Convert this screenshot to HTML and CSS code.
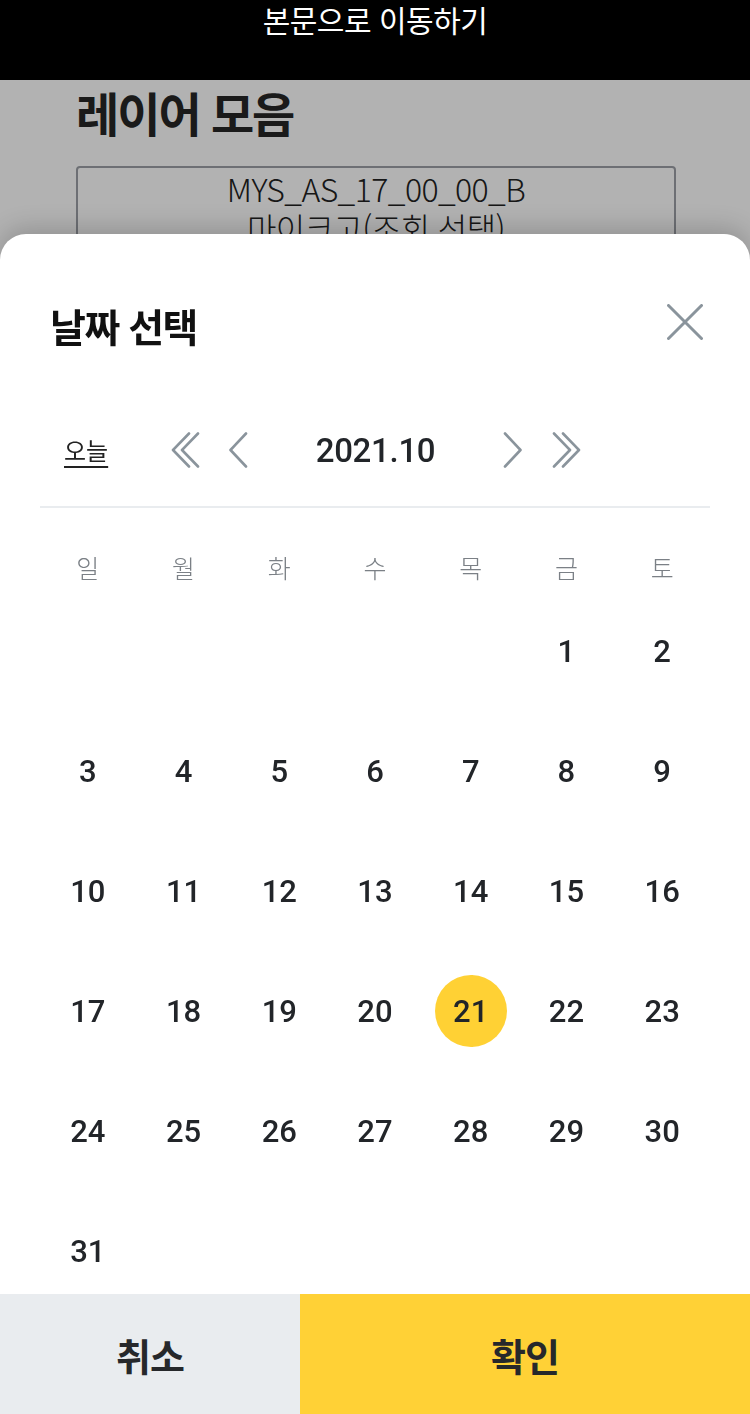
FILE: index.html
```html
<!DOCTYPE html>
<html lang="ko">
<head>
<meta charset="utf-8">
<title>날짜 선택</title>
<link rel="stylesheet" href="styles.css">
</head>
<body>
<a class="skip" href="#main">본문으로 이동하기</a>
<main class="page" id="main">
  <h1 class="page-title">레이어 모음</h1>
  <div class="code-box">
    <p>MYS_AS_17_00_00_B</p>
    <p>마이크고(조회 선택)</p>
  </div>
</main>
<div class="dim"></div>
<section class="sheet" role="dialog" aria-label="날짜 선택">
  <header class="sheet-head">
    <h2 class="sheet-title">날짜 선택</h2>
    <button class="close" type="button" aria-label="닫기">
      <svg width="36" height="36" viewBox="0 0 36 36"><path d="M1.5 1.5 L34.5 34.5 M34.5 1.5 L1.5 34.5" stroke="#8a949c" stroke-width="3" fill="none" stroke-linecap="round"/></svg>
    </button>
  </header>
  <div class="nav">
    <a class="today" href="#">오늘</a>
    <button class="ico" type="button" aria-label="이전 해">
      <svg width="32" height="40" viewBox="0 0 32 40"><path d="M19 3.5 L3 20 L19 36.5 M28 3.5 L12 20 L28 36.5" stroke="#8a949c" stroke-width="2.6" fill="none" stroke-linecap="round" stroke-linejoin="round"/></svg>
    </button>
    <button class="ico prev" type="button" aria-label="이전 달">
      <svg width="20" height="40" viewBox="0 0 20 40"><path d="M18 3.5 L2.5 20 L18 36.5" stroke="#8a949c" stroke-width="2.6" fill="none" stroke-linecap="round" stroke-linejoin="round"/></svg>
    </button>
    <div class="month">2021.10</div>
    <button class="ico" type="button" aria-label="다음 달">
      <svg width="20" height="40" viewBox="0 0 20 40"><path d="M2 3.5 L17.5 20 L2 36.5" stroke="#8a949c" stroke-width="2.6" fill="none" stroke-linecap="round" stroke-linejoin="round"/></svg>
    </button>
    <button class="ico last" type="button" aria-label="다음 해">
      <svg width="32" height="40" viewBox="0 0 32 40"><path d="M4 3.5 L20 20 L4 36.5 M13 3.5 L29 20 L13 36.5" stroke="#8a949c" stroke-width="2.6" fill="none" stroke-linecap="round" stroke-linejoin="round"/></svg>
    </button>
  </div>
  <div class="divider"></div>
  <div class="weekdays">
    <span>일</span><span>월</span><span>화</span><span>수</span><span>목</span><span>금</span><span>토</span>
  </div>
  <div class="days">
    <span></span><span></span><span></span><span></span><span></span>
    <span class="day">1</span><span class="day">2</span>
    <span class="day">3</span><span class="day">4</span><span class="day">5</span><span class="day">6</span><span class="day">7</span><span class="day">8</span><span class="day">9</span>
    <span class="day">10</span><span class="day">11</span><span class="day">12</span><span class="day">13</span><span class="day">14</span><span class="day">15</span><span class="day">16</span>
    <span class="day">17</span><span class="day">18</span><span class="day">19</span><span class="day">20</span><span class="day selected"><b>21</b></span><span class="day">22</span><span class="day">23</span>
    <span class="day">24</span><span class="day">25</span><span class="day">26</span><span class="day">27</span><span class="day">28</span><span class="day">29</span><span class="day">30</span>
    <span class="day">31</span>
  </div>
  <footer class="actions">
    <button class="btn cancel" type="button">취소</button>
    <button class="btn ok" type="button">확인</button>
  </footer>
</section>
</body>
</html>
```

FILE: styles.css
```css
* { box-sizing: border-box; }
html, body { margin: 0; padding: 0; }
body {
  width: 750px;
  height: 1414px;
  overflow: hidden;
  background: #fff;
  font-family: "Noto Sans CJK KR", "Noto Sans", sans-serif;
  color: #2a2a2a;
}
.skip {
  position: relative;
  z-index: 2;
  display: block;
  height: 80px;
  background: #000;
  color: #fff;
  text-decoration: none;
  text-align: center;
  font-size: 30px;
  line-height: 38px;
  margin-top: 0;
  font-weight: 400;
  letter-spacing: -0.5px;
}
.page {
  padding: 0 74px 0 76px;
}
.page-title {
  margin: 0;
  padding-top: 0;
  font-size: 47px;
  line-height: 64px;
  font-weight: 700;
  color: #262626;
  letter-spacing: -2px;
}
.code-box {
  margin-top: 22px;
  border: 2px solid #9ca0a6;
  border-radius: 4px;
  padding: 1px 0 10px;
  text-align: center;
}
.code-box p {
  margin: 0;
  font-size: 32px;
  line-height: 39px;
  font-weight: 300;
  color: #222;
  letter-spacing: -0.6px;
}
.dim {
  position: fixed;
  inset: 0;
  background: rgba(0, 0, 0, 0.3);
}
.sheet {
  position: fixed;
  z-index: 3;
  left: 0;
  right: 0;
  bottom: 0;
  height: 1180px;
  background: #fff;
  border-radius: 26px 26px 0 0;
  box-shadow: 0 -6px 24px rgba(0, 0, 0, 0.18);
  display: flex;
  flex-direction: column;
  overflow: hidden;
}
.sheet-head {
  display: flex;
  align-items: center;
  justify-content: space-between;
  padding: 66px 47px 0 50px;
  height: 116px;
}
.sheet-title {
  margin: 0;
  font-size: 39px;
  line-height: 50px;
  font-weight: 700;
  color: #111;
  letter-spacing: -1.5px;
}
.close {
  border: 0;
  background: none;
  padding: 0;
  width: 36px;
  height: 36px;
  display: flex;
  margin-top: -6px;
}
.nav {
  margin: 60px 40px 0;
  padding-left: 24px;
  height: 80px;
  display: flex;
  align-items: center;
}
.today {
  width: 106px;
  flex: none;
  font-size: 24px;
  line-height: 34px;
  color: #222;
  text-decoration: underline;
  text-underline-offset: 6px;
  text-decoration-thickness: 2px;
}
.ico {
  border: 0;
  background: none;
  padding: 0;
  display: flex;
  flex: none;
}
.ico.prev { margin-left: 26px; }
.ico.last { margin-left: 27px; }
.month {
  width: 255px;
  flex: none;
  text-align: center;
  font-family: Roboto, "Noto Sans", sans-serif;
  font-size: 33px;
  font-weight: 500;
  color: #222529;
  letter-spacing: -0.3px;
}
.divider {
  margin: 16px 40px 0;
  height: 2px;
  background: #e9ecef;
}
.weekdays {
  margin: 0 40px;
  padding-top: 36px;
  height: 83px;
  display: grid;
  grid-template-columns: repeat(7, 1fr);
}
.weekdays span {
  text-align: center;
  font-size: 25px;
  line-height: 46px;
  font-weight: 300;
  color: #7b8086;
}
.days {
  flex: 1;
  min-height: 0;
  overflow: hidden;
  margin: 0 40px;
  display: grid;
  grid-template-columns: repeat(7, 1fr);
  grid-auto-rows: 120px;
  align-content: start;
}
.day {
  display: flex;
  align-items: center;
  justify-content: center;
  font-family: Roboto, "Noto Sans", sans-serif;
  font-size: 31px;
  font-weight: 500;
  color: #222529;
}
.day.selected b {
  width: 72px;
  height: 72px;
  border-radius: 50%;
  background: #ffd134;
  display: flex;
  align-items: center;
  justify-content: center;
  font-weight: 500;
}
.actions {
  height: 120px;
  flex: none;
  display: grid;
  grid-template-columns: 300px 1fr;
}
.btn {
  border: 0;
  margin: 0;
  font-family: "Noto Sans CJK KR", sans-serif;
  font-size: 38px;
  font-weight: 700;
  color: #26282b;
  letter-spacing: -1px;
}
.cancel { background: #e9ecef; }
.ok { background: #ffd136; }
```
